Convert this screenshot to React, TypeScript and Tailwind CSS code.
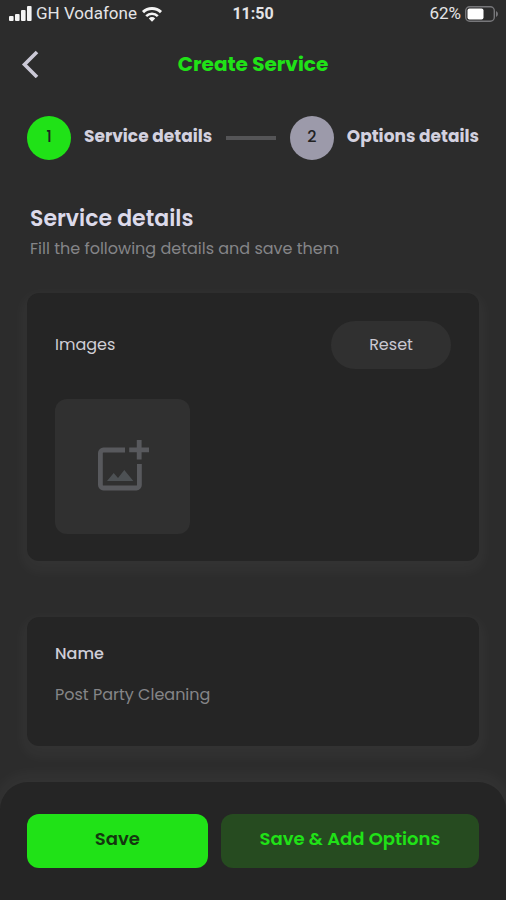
import { Fragment } from "react";

const steps = [
  { label: "Service details", active: true },
  { label: "Options details", active: false },
];

function StatusBar() {
  return (
    <div className="grid grid-cols-3 items-center h-7 px-2 text-[17px] text-[#e4e4e6] font-['Roboto','Liberation_Sans',sans-serif]">
      <div className="flex items-center gap-1 whitespace-nowrap">
        <svg width="24" height="16" viewBox="0 0 24 16" fill="#f4f4f4" className="shrink-0">
          <rect x="1" y="10" width="4.6" height="5" rx="1" />
          <rect x="7" y="8" width="4.6" height="7" rx="1" />
          <rect x="13" y="4" width="4.6" height="11" rx="1" />
          <rect x="19" y="0" width="4.6" height="15" rx="1" />
        </svg>
        <span>GH Vodafone</span>
        <svg width="22" height="16" viewBox="0 0 22 16" className="shrink-0">
          <path d="M2 6.2a13 13 0 0 1 18 0" fill="none" stroke="#f4f4f4" strokeWidth="3" />
          <path d="M5.2 10.2a8.2 8.2 0 0 1 11.6 0" fill="none" stroke="#f4f4f4" strokeWidth="2.6" />
          <path d="M7.8 12.4a4.6 4.6 0 0 1 6.4 0L11 15.8z" fill="#f4f4f4" />
        </svg>
      </div>
      <span className="text-center text-base font-bold">11:50</span>
      <div className="flex items-center justify-end gap-1">
        <span>62%</span>
        <svg width="33" height="16" viewBox="0 0 33 16" className="shrink-0">
          <rect x="0.7" y="0.7" width="28.6" height="14.6" rx="4" fill="none" stroke="#77777a" strokeWidth="1.4" />
          <rect x="2.5" y="2.5" width="16" height="11" rx="2" fill="#fff" />
          <path d="M31 5v6q2-1 2-3t-2-3z" fill="#77777a" />
        </svg>
      </div>
    </div>
  );
}

function AddImageIcon() {
  return (
    <svg width="52" height="54" viewBox="0 0 52 54" fill="none">
      <path
        d="M28 10H6.4a3 3 0 0 0-3 3v32a3 3 0 0 0 3 3h33a3 3 0 0 0 3-3V24"
        stroke="#58595d"
        strokeWidth="4.8"
      />
      <path d="M42.2 0v19.6M32.2 9.8H52" stroke="#58595d" strokeWidth="4.8" />
      <path d="M10 41L16.7 33L21 38L27.3 30L36.3 41Z" fill="#4d5154" />
    </svg>
  );
}

const card =
  "rounded-xl bg-[#252525] px-7 shadow-[0_6px_14px_5px_rgba(255,255,255,0.035)]";

export default function App() {
  return (
    <div className="min-h-screen flex flex-col bg-[#2c2c2c] font-['Poppins','Inter',sans-serif]">
      <StatusBar />

      <header className="grid grid-cols-[32px_1fr_32px] items-center h-18 px-3.5">
        <button type="button" aria-label="Back" className="flex justify-center">
          <svg width="20" height="28" viewBox="0 0 20 28" fill="none">
            <path d="M17 2L4.5 14.5L17 27" stroke="#cbc9d6" strokeWidth="3.6" />
          </svg>
        </button>
        <h1 className="text-center text-xl font-bold text-[#20e217]">
          Create Service
        </h1>
      </header>

      <main className="px-[27px]">
        <ol className="flex items-center pt-4">
          {steps.map((step, index) => (
            <Fragment key={step.label}>
              {index > 0 && (
                <li aria-hidden="true" className="flex-1 h-1 mx-3.5 bg-[#555557]" />
              )}
              <li className="flex items-center gap-[13px] whitespace-nowrap">
                <span
                  className={`flex items-center justify-center size-11 pb-0.5 rounded-full text-base font-medium text-[#222] ${
                    step.active ? "bg-[#20e217]" : "bg-[#9c9aaa]"
                  }`}
                >
                  {index + 1}
                </span>
                <span className="pb-0.5 text-[17px] font-bold text-[#d3d1df]">
                  {step.label}
                </span>
              </li>
            </Fragment>
          ))}
        </ol>

        <div className="px-[3px] pt-[45px]">
          <h2 className="text-[22px] leading-7 font-semibold text-[#dcdaea]">
            Service details
          </h2>
          <p className="text-base leading-8 text-[#858588]">
            Fill the following details and save them
          </p>
        </div>

        <section className={`${card} mt-7 pt-7 pb-[27px]`}>
          <div className="flex items-center justify-between">
            <h3 className="text-base text-[#d0cfd6]">Images</h3>
            <button
              type="button"
              className="w-30 h-12 rounded-full bg-[#303030] text-base text-[#c9c8d2]"
            >
              Reset
            </button>
          </div>
          <button
            type="button"
            aria-label="Add image"
            className="flex items-center justify-center mt-[30px] size-[135px] rounded-xl bg-[#303030]"
          >
            <AddImageIcon />
          </button>
        </section>

        <section className={`${card} mt-14 pt-[21px] pb-9`}>
          <label htmlFor="name" className="block text-base leading-8 font-medium text-[#cfced8]">
            Name
          </label>
          <input
            id="name"
            type="text"
            placeholder="Post Party Cleaning"
            className="w-full h-8 mt-2 bg-transparent text-base text-[#d0cfd6] placeholder:text-[#858588] outline-none"
          />
        </section>
      </main>

      <footer className="sticky bottom-0 mt-auto grid grid-cols-[7fr_10fr] gap-[13px] px-[27px] py-8 rounded-t-[28px] bg-[#252525] shadow-[0_-4px_16px_4px_rgba(255,255,255,0.04)] text-lg font-semibold">
        <button type="button" className="h-[54px] pb-1 rounded-xl bg-[#20e217] text-[#14380f]">
          Save
        </button>
        <button type="button" className="h-[54px] pb-1 rounded-xl bg-[#264b20] text-[#20e217]">
          Save &amp; Add Options
        </button>
      </footer>
    </div>
  );
}
